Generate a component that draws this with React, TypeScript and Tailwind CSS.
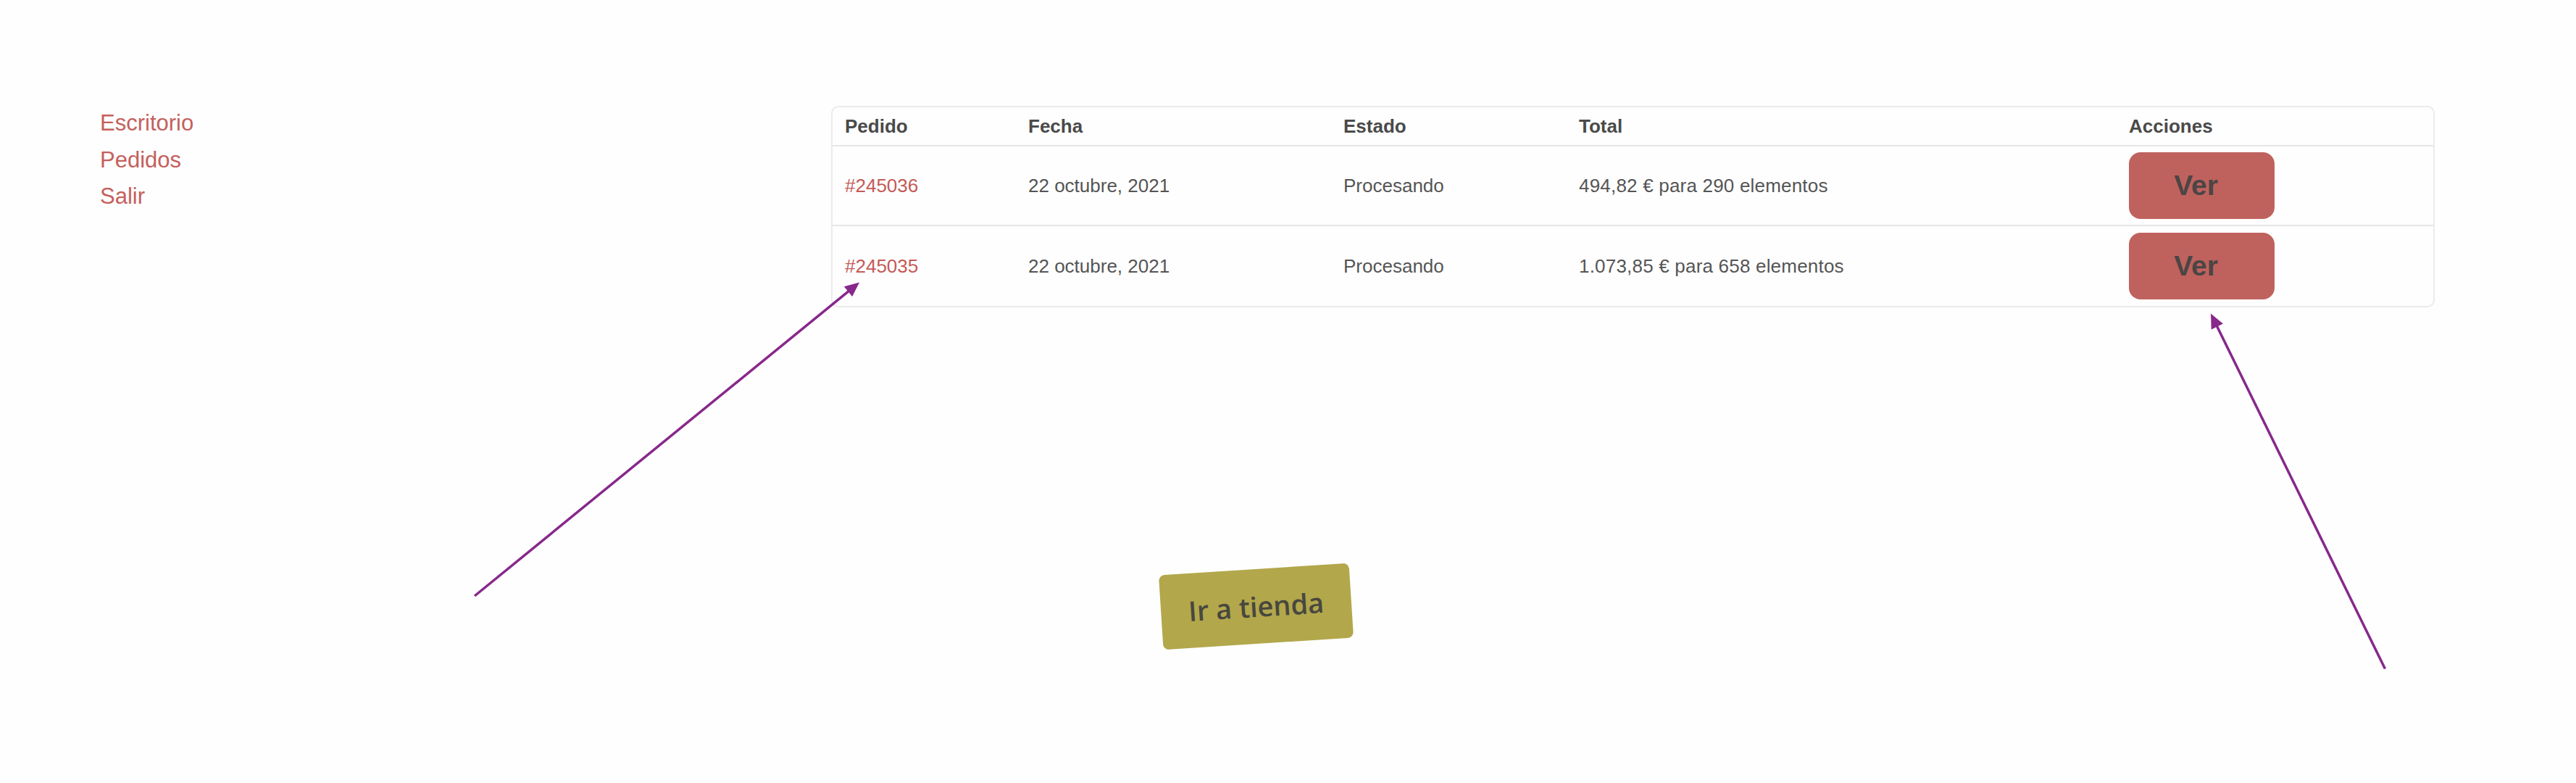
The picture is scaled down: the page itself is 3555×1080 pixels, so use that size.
type Pt = { x: number; y: number }

const orders = [
  { id: '#245036', date: '22 octubre, 2021', status: 'Procesando', total: '494,82 € para 290 elementos' },
  { id: '#245035', date: '22 octubre, 2021', status: 'Procesando', total: '1.073,85 € para 658 elementos' },
]

const cols = 'grid grid-cols-[253px_435px_325px_759px_1fr]'

// Annotation arrow: line from tail to the base of a filled triangular head
function Arrow({ from, to }: { from: Pt; to: Pt }) {
  const dx = to.x - from.x
  const dy = to.y - from.y
  const len = Math.hypot(dx, dy)
  const ux = dx / len
  const uy = dy / len
  const head = 20
  const half = 9
  const bx = to.x - ux * head
  const by = to.y - uy * head
  const pts = `${to.x},${to.y} ${bx - uy * half},${by + ux * half} ${bx + uy * half},${by - ux * half}`
  return (
    <g>
      <line x1={from.x} y1={from.y} x2={bx + ux * 2} y2={by + uy * 2} stroke="#87288b" strokeWidth={3.5} />
      <polygon points={pts} fill="#87288b" />
    </g>
  )
}

export default function App() {
  return (
    <div className="relative w-[3555px] h-[1080px] bg-[#fefefe] font-['Liberation_Sans',Arial,sans-serif] overflow-hidden">
      <div className="flex items-start pl-[138px]">
        {/* Account menu */}
        <nav className="w-[1009px] mt-[145px] flex flex-col text-[31px] leading-[50.5px] text-[#c4605c]">
          <a>Escritorio</a>
          <a>Pedidos</a>
          <a>Salir</a>
        </nav>

        {/* Orders table */}
        <div className="mt-[146px] w-[2213px] border-2 border-[#ebebeb] rounded-[10px] text-[26px] leading-[30px]">
          <div className={`${cols} h-[54px] items-center font-bold text-[#4a4a4a] border-b-2 border-[#e6e6e6]`}>
            <div className="pl-[17px]">Pedido</div>
            <div className="pl-[17px]">Fecha</div>
            <div className="pl-[17px]">Estado</div>
            <div className="pl-[17px]">Total</div>
            <div className="pl-[17px]">Acciones</div>
          </div>
          {orders.map((o, i) => (
            <div
              key={o.id}
              className={`${cols} h-[110px] items-center text-[#555555] ${i === 0 ? 'border-b-2 border-[#e6e6e6]' : ''}`}
            >
              <div className="pl-[17px] text-[#c45a57]">{o.id}</div>
              <div className="pl-[17px]">{o.date}</div>
              <div className="pl-[17px]">{o.status}</div>
              <div className="pl-[17px] tracking-[0.2px]">{o.total}</div>
              <div className="pl-[17px]">
                <button className="w-[201px] h-[92px] rounded-[16px] bg-[#bf625e] text-[39px] font-bold text-[#4b4545] pr-4">
                  Ver
                </button>
              </div>
            </div>
          ))}
        </div>
      </div>

      <button className="ml-[1602px] mt-[361px] w-[263px] h-[103px] -rotate-[3.7deg] rounded-lg bg-[#b2a74b] text-[38px] font-semibold text-[#48473f] font-['Open_Sans',sans-serif]">
        Ir a tienda
      </button>

      <svg className="absolute inset-0 pointer-events-none" width={3555} height={1080}>
        <Arrow from={{ x: 655, y: 822 }} to={{ x: 1186, y: 389.5 }} />
        <Arrow from={{ x: 3291.5, y: 922.5 }} to={{ x: 3051, y: 432.5 }} />
      </svg>
    </div>
  )
}
